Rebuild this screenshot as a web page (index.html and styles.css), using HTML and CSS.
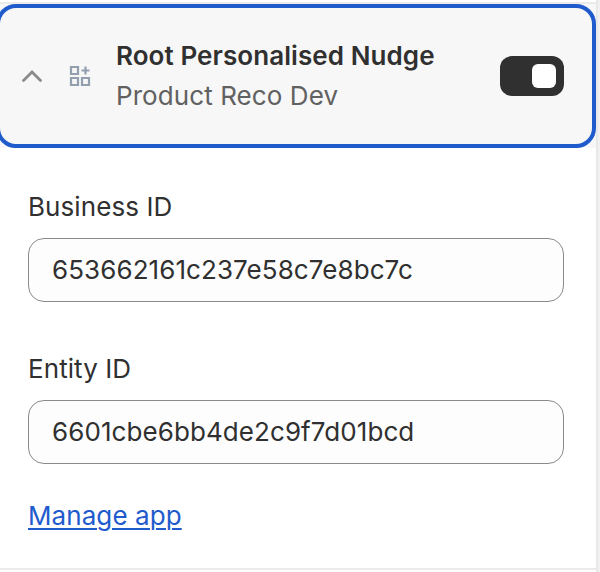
FILE: index.html
```html
<!DOCTYPE html>
<html lang="en">
<head>
<meta charset="utf-8">
<title>App embed settings</title>
<link rel="stylesheet" href="styles.css">
</head>
<body>
<main class="panel">
  <div class="embed-row">
    <header class="embed">
      <svg class="chevron" viewBox="0 0 20 12" aria-hidden="true"><path d="M1.5 10.5l8.5-8.5 8.5 8.5"/></svg>
      <svg class="app-icon" viewBox="0 0 22 22" aria-hidden="true"><path d="M2 2h7v7H2zM2 13h7v7H2zM13 13h7v7h-7z"/><path d="M16.5 1.5v8M12.5 5.5h8"/></svg>
      <div class="titles">
        <h1 class="title">Root Personalised Nudge</h1>
        <p class="subtitle">Product Reco Dev</p>
      </div>
      <button class="toggle" role="switch" aria-checked="true"><span class="knob"></span></button>
    </header>
  </div>
  <form class="settings">
    <label class="field">Business ID<input class="input" value="653662161c237e58c7e8bc7c"></label>
    <label class="field">Entity ID<input class="input" value="6601cbe6bb4de2c9f7d01bcd"></label>
    <a class="manage" href="#">Manage app</a>
  </form>
</main>
</body>
</html>
```

FILE: styles.css
```css
* { box-sizing: border-box; }
body {
  margin: 0;
  height: 572px;
  overflow: hidden;
  background: linear-gradient(to right, #fff 596px, #e8e8e8 596px, #e8e8e8 598px, #f1f1f1 598px);
  font-family: Inter, sans-serif;
  font-size: 26px;
  line-height: 40px;
  letter-spacing: 0.08px;
  color: #303030;
}
.panel {
  width: 596px;
  height: 570px;
  padding-top: 2px;
  border-bottom: 2px solid #ebebeb;
}
.embed-row {
  height: 146px;
  border-top: 2px solid #ebebeb;
  background: #f7f7f7;
}
.embed {
  display: flex;
  align-items: center;
  width: 600px;
  height: 144px;
  margin-left: -4px;
  padding: 0 28px 0 22px;
  border: 4px solid #1f5bcd;
  border-radius: 20px;
  background: #f7f7f7;
}
.chevron { width: 20px; height: 12px; margin-right: 27px; }
.app-icon { width: 22px; height: 22px; margin-right: 25px; }
.chevron path { fill: none; stroke: #8a8a8a; stroke-width: 2.8; stroke-linecap: round; }
.app-icon path { fill: none; stroke: #939eae; stroke-width: 2.2; }
.titles { flex: 1; }
.title, .subtitle { margin: 0; font-size: 26px; line-height: 40px; }
.title { font-weight: 600; }
.subtitle { color: #616161; }
.toggle {
  display: flex;
  justify-content: flex-end;
  width: 64px;
  height: 40px;
  padding: 8px;
  border: 0;
  border-radius: 12px;
  background: #303030;
}
.knob { width: 24px; height: 24px; border-radius: 6px; background: #fff; }
.settings { padding: 39px 32px 0 28px; }
.field { display: block; margin-bottom: 47px; }
.input {
  display: block;
  width: 536px;
  height: 64px;
  margin-top: 11px;
  padding: 0 23px 2px;
  border: 1px solid #8a8a8a;
  border-radius: 16px;
  background: #fdfdfd;
  color: #303030;
  font: inherit;
  letter-spacing: inherit;
}
.manage {
  display: block;
  width: max-content;
  margin-top: -15px;
  color: #1f5bcd;
  text-decoration-thickness: 2px;
  text-underline-offset: 3px;
}
```
